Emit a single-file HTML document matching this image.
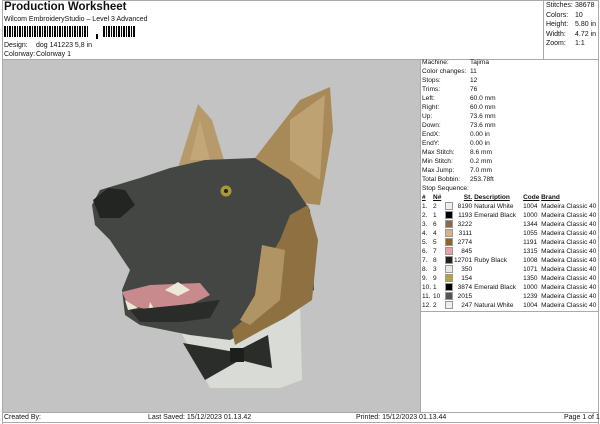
<!DOCTYPE html>
<html><head><style>
body{margin:0;width:600px;height:424px;background:#fff;font-family:"Liberation Sans",sans-serif;color:#111;position:relative;overflow:hidden}
.a{position:absolute;white-space:nowrap;font-size:7px;line-height:9px}
.t{position:absolute;left:4px;top:1px;font-size:11.5px;font-weight:bold}
.hl{position:absolute;background:#aaa}
table{border-collapse:collapse;font-size:6.6px}
td{padding:0;height:9px;line-height:9px;white-space:nowrap}
.sw{display:inline-block;width:6px;height:6px;border:1px solid #999;vertical-align:middle}
</style></head><body>
<div class="t">Production Worksheet</div>
<div class="a" style="left:4px;top:15px">Wilcom EmbroideryStudio – Level 3 Advanced</div>
<svg style="position:absolute;left:4px;top:26px" width="135" height="13">
<g fill="#000">
<rect x="0" y="0" width="2" height="11"/><rect x="3" width="1" height="11"/><rect x="5" width="2" height="11"/><rect x="8" width="1" height="11"/><rect x="10" width="2" height="11"/><rect x="13" width="1" height="11"/><rect x="15" width="2" height="11"/><rect x="18" width="1" height="11"/><rect x="20" width="2" height="11"/><rect x="23" width="1" height="11"/><rect x="25" width="2" height="11"/><rect x="28" width="1" height="11"/><rect x="30" width="2" height="11"/><rect x="33" width="1" height="11"/><rect x="35" width="2" height="11"/><rect x="38" width="1" height="11"/><rect x="40" width="2" height="11"/><rect x="43" width="1" height="11"/><rect x="45" width="2" height="11"/><rect x="48" width="1" height="11"/><rect x="50" width="2" height="11"/><rect x="53" width="1" height="11"/><rect x="55" width="2" height="11"/><rect x="58" width="1" height="11"/><rect x="60" width="2" height="11"/><rect x="63" width="1" height="11"/><rect x="65" width="2" height="11"/><rect x="68" width="1" height="11"/><rect x="70" width="2" height="11"/><rect x="73" width="1" height="11"/><rect x="75" width="2" height="11"/><rect x="78" width="1" height="11"/><rect x="80" width="2" height="11"/><rect x="83" width="1" height="11"/>
<rect x="92" y="8" width="2" height="5"/>
<rect x="99" width="2" height="11"/><rect x="102" width="1" height="11"/><rect x="104" width="2" height="11"/><rect x="107" width="1" height="11"/><rect x="109" width="2" height="11"/><rect x="112" width="1" height="11"/><rect x="114" width="2" height="11"/><rect x="117" width="1" height="11"/><rect x="119" width="2" height="11"/><rect x="122" width="1" height="11"/><rect x="124" width="2" height="11"/><rect x="127" width="1" height="11"/><rect x="129" width="2" height="11"/>
</g></svg>
<div class="a" style="left:4px;top:41px">Design:</div><div class="a" style="left:36px;top:41px">dog 141223 5,8 in</div>
<div class="a" style="left:4px;top:50px">Colorway:</div><div class="a" style="left:36px;top:50px">Colorway 1</div>
<div class="hl" style="left:2px;top:59px;width:596px;height:1px"></div>
<div class="hl" style="left:598px;top:0;width:1px;height:424px"></div>
<div class="hl" style="left:2px;top:0;width:597px;height:1px"></div>
<div class="hl" style="left:2px;top:0;width:1px;height:424px"></div>
<div class="hl" style="left:543px;top:0;width:1px;height:59px"></div>
<div class="a" style="left:546px;top:1px">Stitches:</div><div class="a" style="left:575px;top:1px">38678</div>
<div class="a" style="left:546px;top:10.5px">Colors:</div><div class="a" style="left:575px;top:10.5px">10</div>
<div class="a" style="left:546px;top:20px">Height:</div><div class="a" style="left:575px;top:20px">5.80 in</div>
<div class="a" style="left:546px;top:29.5px">Width:</div><div class="a" style="left:575px;top:29.5px">4.72 in</div>
<div class="a" style="left:546px;top:39px">Zoom:</div><div class="a" style="left:575px;top:39px">1:1</div>
<div style="position:absolute;left:3px;top:60px;width:417px;height:352px;background:#c3c3c3"></div>
<svg style="position:absolute;left:0;top:0" width="600" height="424">
<path d="M180,330 L300,300 L302,380 L280,388 L210,388 Z" fill="#d9dcd6"/>
<path d="M178,168 L198,104 L212,120 L224,160 Z" fill="#b79a6c"/>
<path d="M255,158 L300,100 L330,87 L333,130 L320,205 L275,200 Z" fill="#a88a58"/>
<path d="M190,160 L200,120 L210,160Z M290,120 L325,95 L320,180 L290,160Z" fill="#c7ad7e" opacity=".7"/>
<path d="M92,205 L100,190 L140,178 L170,168 L205,160 L255,158 L290,180 L310,210 L313,260 L314,290 L300,300 L260,325 L230,340 L190,335 L140,325 L125,315 L122,290 L130,270 L110,240 L95,225 Z" fill="#434642"/>
<path d="M308,205 L318,240 L312,300 L285,318 L262,330 L235,345 L232,330 L255,310 L262,270 L280,240 L290,215Z" fill="#8f7040"/>
<path d="M262,245 L285,250 L280,300 L250,325 L240,320 L255,295Z" fill="#b09464"/>
<path d="M93,200 L108,188 L125,190 L135,205 L120,218 L100,218 Z" fill="#232523"/>
<circle cx="226" cy="191" r="5.5" fill="#a59a37"/><circle cx="226" cy="191" r="2" fill="#222"/>
<path d="M122,292 L150,285 L200,283 L210,295 L190,305 L150,310 L128,305 Z" fill="#c98a8e"/>
<path d="M165,290 L178,282 L190,290 L178,296Z M125,300 L128,310 L138,308Z M150,302 L148,312 L156,312Z" fill="#ece8d8"/>
<path d="M130,310 L180,305 L220,300 L210,318 L180,322 L140,322Z" fill="#2a2c2a"/>
<path d="M183,343 L235,352 L268,335 L272,368 L240,360 L205,380 Z" fill="#2b2d2b"/>
<rect x="230" y="348" width="14" height="14" fill="#1d1f1d"/>
</svg>
<div class="hl" style="left:420px;top:59px;width:1px;height:353px"></div>
<div style="position:absolute;left:422px;top:58px">
<table>
<tr><td style="width:48px">Machine:</td><td>Tajima</td></tr>
<tr><td>Color changes:</td><td>11</td></tr>
<tr><td>Stops:</td><td>12</td></tr>
<tr><td>Trims:</td><td>76</td></tr>
<tr><td>Left:</td><td>60.0 mm</td></tr>
<tr><td>Right:</td><td>60.0 mm</td></tr>
<tr><td>Up:</td><td>73.6 mm</td></tr>
<tr><td>Down:</td><td>73.6 mm</td></tr>
<tr><td>EndX:</td><td>0.00 in</td></tr>
<tr><td>EndY:</td><td>0.00 in</td></tr>
<tr><td>Max Stitch:</td><td>8.6 mm</td></tr>
<tr><td>Min Stitch:</td><td>0.2 mm</td></tr>
<tr><td>Max Jump:</td><td>7.0 mm</td></tr>
<tr><td>Total Bobbin:</td><td>253.78ft</td></tr>
<tr><td colspan="2">Stop Sequence:</td></tr>
</table>
<table style="font-size:6.5px">
<tr style="text-decoration:underline;font-weight:bold"><td style="width:11px">#</td><td style="width:12px">N#</td><td style="width:9px"></td><td style="width:16px;text-align:right">St.</td><td style="width:49px;padding-left:2px">Description</td><td style="width:18px">Code</td><td>Brand</td></tr>
<tr><td>1.</td><td>2</td><td><span class="sw" style="background:#eeeef2"></span></td><td align="right">8190</td><td style="padding-left:2px">Natural White</td><td>1004</td><td>Madeira Classic 40</td></tr>
<tr><td>2.</td><td>1</td><td><span class="sw" style="background:#000"></span></td><td align="right">1193</td><td style="padding-left:2px">Emerald Black</td><td>1000</td><td>Madeira Classic 40</td></tr>
<tr><td>3.</td><td>6</td><td><span class="sw" style="background:#8a6a4c"></span></td><td align="right">3222</td><td></td><td>1344</td><td>Madeira Classic 40</td></tr>
<tr><td>4.</td><td>4</td><td><span class="sw" style="background:#d8b088"></span></td><td align="right">3111</td><td></td><td>1055</td><td>Madeira Classic 40</td></tr>
<tr><td>5.</td><td>5</td><td><span class="sw" style="background:#8e6428"></span></td><td align="right">2774</td><td></td><td>1191</td><td>Madeira Classic 40</td></tr>
<tr><td>6.</td><td>7</td><td><span class="sw" style="background:#e8a0aa"></span></td><td align="right">845</td><td></td><td>1315</td><td>Madeira Classic 40</td></tr>
<tr><td>7.</td><td>8</td><td><span class="sw" style="background:#222"></span></td><td align="right">12701</td><td style="padding-left:2px">Ruby Black</td><td>1008</td><td>Madeira Classic 40</td></tr>
<tr><td>8.</td><td>3</td><td><span class="sw" style="background:#ece8e0"></span></td><td align="right">350</td><td></td><td>1071</td><td>Madeira Classic 40</td></tr>
<tr><td>9.</td><td>9</td><td><span class="sw" style="background:#b8a040"></span></td><td align="right">154</td><td></td><td>1350</td><td>Madeira Classic 40</td></tr>
<tr><td>10.</td><td>1</td><td><span class="sw" style="background:#000"></span></td><td align="right">3874</td><td style="padding-left:2px">Emerald Black</td><td>1000</td><td>Madeira Classic 40</td></tr>
<tr><td>11.</td><td>10</td><td><span class="sw" style="background:#555"></span></td><td align="right">2015</td><td></td><td>1239</td><td>Madeira Classic 40</td></tr>
<tr><td>12.</td><td>2</td><td><span class="sw" style="background:#eeeef2"></span></td><td align="right">247</td><td style="padding-left:2px">Natural White</td><td>1004</td><td>Madeira Classic 40</td></tr>
</table>
</div>
<div class="hl" style="left:420px;top:311px;width:178px;height:1px"></div>
<div class="hl" style="left:2px;top:412px;width:596px;height:1px"></div>
<div class="a" style="left:4px;top:413px">Created By:</div>
<div class="a" style="left:148px;top:413px">Last Saved: 15/12/2023 01.13.42</div>
<div class="a" style="left:356px;top:413px">Printed: 15/12/2023 01.13.44</div>
<div class="a" style="left:564px;top:413px">Page 1 of 1</div>
<div class="hl" style="left:2px;top:422px;width:596px;height:1px"></div>
</body></html>
